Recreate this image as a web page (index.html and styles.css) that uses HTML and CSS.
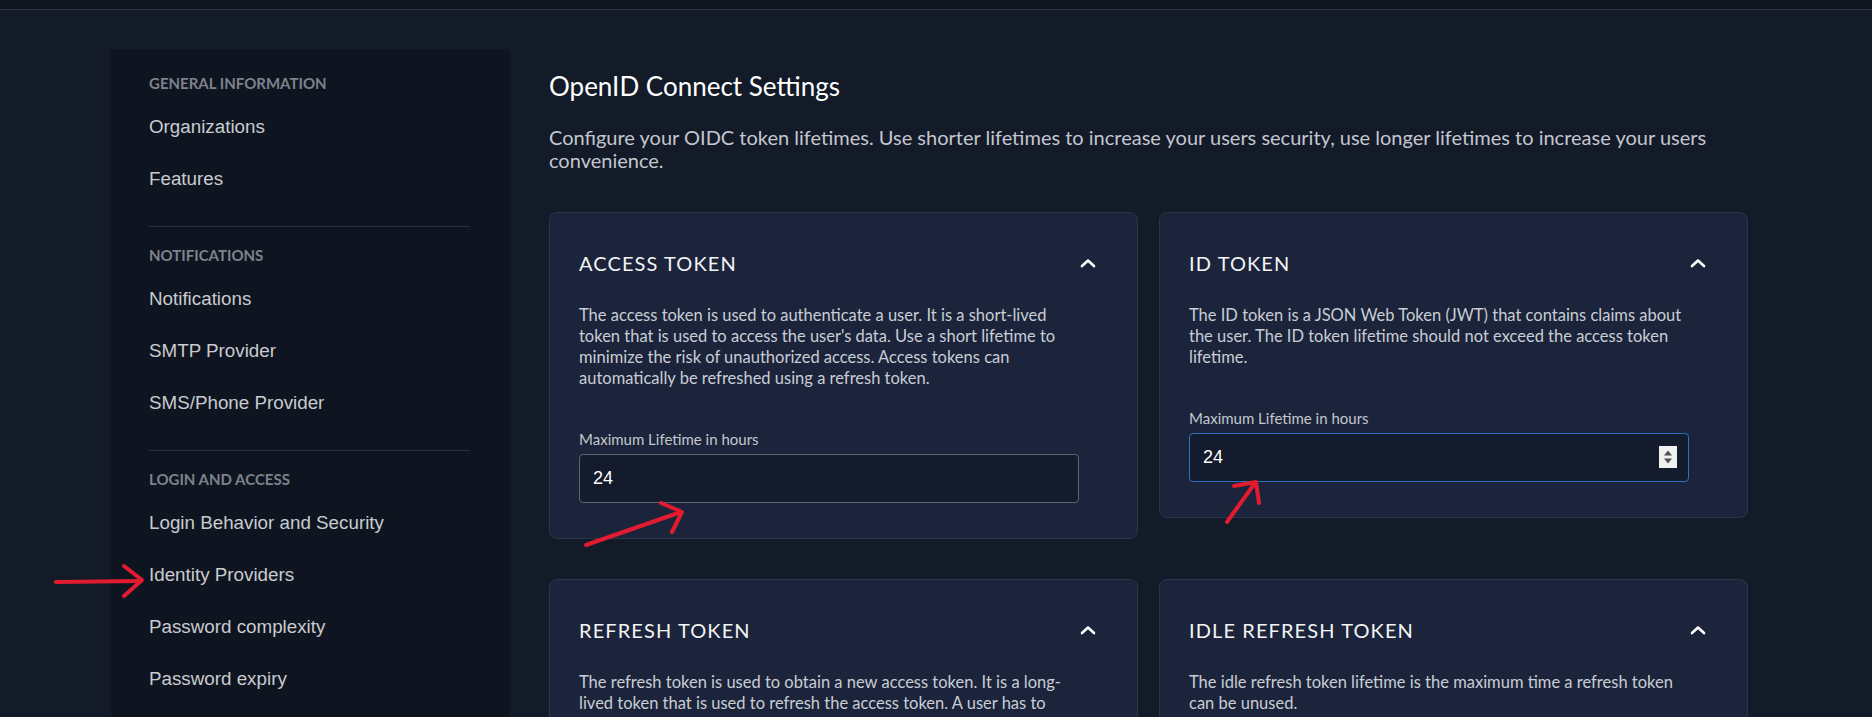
FILE: index.html
```html
<!DOCTYPE html>
<html lang="en">
<head>
<meta charset="utf-8">
<title>OpenID Connect Settings</title>
<link rel="stylesheet" href="styles.css">
</head>
<body>
<div class="topbar"></div>
<div class="page">
  <nav class="sidebar">
    <div class="nav-section">
      <div class="nav-label">General Information</div>
      <a class="nav-item">Organizations</a>
      <a class="nav-item">Features</a>
    </div>
    <div class="nav-divider"></div>
    <div class="nav-section">
      <div class="nav-label">Notifications</div>
      <a class="nav-item">Notifications</a>
      <a class="nav-item">SMTP Provider</a>
      <a class="nav-item">SMS/Phone Provider</a>
    </div>
    <div class="nav-divider"></div>
    <div class="nav-section">
      <div class="nav-label">Login and Access</div>
      <a class="nav-item">Login Behavior and Security</a>
      <a class="nav-item">Identity Providers</a>
      <a class="nav-item">Password complexity</a>
      <a class="nav-item">Password expiry</a>
    </div>
  </nav>
  <main class="main">
    <h1 class="title">OpenID Connect Settings</h1>
    <p class="intro">Configure your OIDC token lifetimes. Use shorter lifetimes to increase your users security, use longer lifetimes to increase your users convenience.</p>
    <div class="cards">
      <section class="card">
        <div class="card-head">
          <h2 class="card-title">Access Token</h2>
          <svg class="chev" width="16" height="10" viewBox="0 0 16 10"><path d="M2 8 L8 2.5 L14 8" fill="none" stroke="#fff" stroke-width="2.6" stroke-linecap="round" stroke-linejoin="round"/></svg>
        </div>
        <p class="card-desc">The access token is used to authenticate a user. It is a short-lived token that is used to access the user's data. Use a short lifetime to minimize the risk of unauthorized access. Access tokens can automatically be refreshed using a refresh token.</p>
        <label class="field-label">Maximum Lifetime in hours</label>
        <div class="field">
          <input class="field-input" type="text" value="24">
        </div>
      </section>
      <section class="card">
        <div class="card-head">
          <h2 class="card-title">ID Token</h2>
          <svg class="chev" width="16" height="10" viewBox="0 0 16 10"><path d="M2 8 L8 2.5 L14 8" fill="none" stroke="#fff" stroke-width="2.6" stroke-linecap="round" stroke-linejoin="round"/></svg>
        </div>
        <p class="card-desc">The ID token is a JSON Web Token (JWT) that contains claims about the user. The ID token lifetime should not exceed the access token lifetime.</p>
        <label class="field-label">Maximum Lifetime in hours</label>
        <div class="field field-focus">
          <input class="field-input" type="text" value="24">
          <span class="spinner">
            <svg width="18" height="22" viewBox="0 0 18 22"><rect width="18" height="22" fill="#f1f1f1"/><path d="M5 9.5 L9 4.5 L13 9.5 Z" fill="#505050"/><path d="M5 12.5 L9 17.5 L13 12.5 Z" fill="#505050"/></svg>
          </span>
        </div>
      </section>
      <section class="card">
        <div class="card-head">
          <h2 class="card-title">Refresh Token</h2>
          <svg class="chev" width="16" height="10" viewBox="0 0 16 10"><path d="M2 8 L8 2.5 L14 8" fill="none" stroke="#fff" stroke-width="2.6" stroke-linecap="round" stroke-linejoin="round"/></svg>
        </div>
        <p class="card-desc">The refresh token is used to obtain a new access token. It is a long-lived token that is used to refresh the access token. A user has to manually reauthenticate when the refresh token expires.</p>
      </section>
      <section class="card">
        <div class="card-head">
          <h2 class="card-title">Idle Refresh Token</h2>
          <svg class="chev" width="16" height="10" viewBox="0 0 16 10"><path d="M2 8 L8 2.5 L14 8" fill="none" stroke="#fff" stroke-width="2.6" stroke-linecap="round" stroke-linejoin="round"/></svg>
        </div>
        <p class="card-desc">The idle refresh token lifetime is the maximum time a refresh token can be unused.</p>
      </section>
    </div>
  </main>
</div>
<svg class="annotations" width="1872" height="717" viewBox="0 0 1872 717">
  <g fill="none" stroke="#e21b30" stroke-width="4" stroke-linecap="round" stroke-linejoin="round">
    <path d="M56 582 L141 581"/>
    <path d="M124 566 L142 580 L124 596"/>
    <path d="M586 545 L681 512"/>
    <path d="M661 503 L682 512 L672 532"/>
    <path d="M1227 522 L1255 483"/>
    <path d="M1234 486 L1256 482 L1259 503"/>
  </g>
</svg>
</body>
</html>
```
FILE: styles.css
```css
* { box-sizing: border-box; }
html, body { margin: 0; padding: 0; }
body {
  background: #131a28;
  font-family: "Lato", "Liberation Sans", sans-serif;
  color: #c6cad2;
  width: 1872px;
  height: 717px;
  overflow: hidden;
  position: relative;
}
.topbar {
  height: 10px;
  background: #10151f;
  border-bottom: 1px solid #283041;
}
.page {
  display: flex;
  padding-top: 39px;
  padding-left: 111px;
}
.sidebar {
  width: 399px;
  flex: none;
  background: #0f1520;
  padding: 26px 40px 0 38px;
  min-height: 700px;
}
.nav-section { display: flex; flex-direction: column; }
.nav-label {
  font-family: "Lato", sans-serif;
  font-weight: 700;
  font-size: 15px;
  line-height: 17px;
  text-transform: uppercase;
  color: #7d828d;
  margin-bottom: 9px;
}
.nav-item {
  font-family: "Liberation Sans", Arial, sans-serif;
  font-size: 18.8px;
  height: 52px;
  display: flex;
  align-items: center;
  color: #c9cbd0;
}
.nav-divider {
  height: 1px;
  background: #283041;
  margin: 21px 0 20px;
  width: 321px;
}
.main {
  margin-left: 39px;
  width: 1200px;
  flex: none;
}
.title {
  font-weight: 400;
  font-size: 26px;
  line-height: 30px;
  color: #ffffff;
  margin: 22px 0 0;
}
.intro {
  font-size: 20px;
  line-height: 22.7px;
  color: #c3c7cf;
  margin: 25px 0 0;
  max-width: 1170px;
}
.cards {
  margin-top: 41px;
  display: grid;
  grid-template-columns: 589px 589px;
  column-gap: 21px;
  row-gap: 40px;
  align-items: start;
}
.card {
  background: #1b243a;
  border: 1px solid #2b3549;
  border-radius: 8px;
  padding: 37px 40px 35px 29px;
}
.card-head {
  display: flex;
  align-items: center;
  justify-content: space-between;
  height: 26px;
}
.card-title {
  margin: 0;
  font-weight: 400;
  font-size: 20px;
  letter-spacing: 0.055em;
  text-transform: uppercase;
  color: #f3f4f6;
}
.chev { margin-right: 1px; }
.card-desc {
  margin: 29px 0 0;
  font-size: 16.5px;
  line-height: 21px;
  color: #c9cdd5;
  max-width: 500px;
}
.field-label {
  display: block;
  margin-top: 42px;
  font-size: 15px;
  line-height: 17px;
  color: #c3c7cf;
}
.field {
  margin-top: 5.5px;
  width: 500px;
  height: 49px;
  display: flex;
  align-items: center;
  background: #131b2c;
  border: 1px solid #5d6372;
  border-radius: 4px;
  padding: 0 11px 0 13px;
}
.field-focus { border-color: #2e6fbf; }
.field-input {
  flex: 1;
  min-width: 0;
  background: transparent;
  border: 0;
  outline: none;
  color: #ffffff;
  font-family: "Liberation Sans", Arial, sans-serif;
  font-size: 18px;
  padding: 0;
}
.spinner { display: flex; }
.annotations {
  position: absolute;
  left: 0;
  top: 0;
  pointer-events: none;
}
```
